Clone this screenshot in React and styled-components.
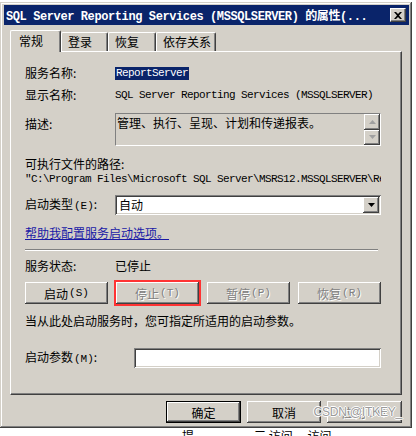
import React from 'react';
import styled, { createGlobalStyle, css } from 'styled-components';

const GlobalStyle = createGlobalStyle`
  html, body {
    margin: 0;
    padding: 0;
    background: #ffffff;
    overflow: hidden;
  }
  body {
    font-family: "Noto Sans CJK SC", "Liberation Sans", sans-serif;
    font-size: 12px;
    color: #000;
  }
`;

const FACE = '#d4d0c8';
const mono = css`
  font-family: "Liberation Mono", "Noto Sans CJK SC", monospace;
  font-size: 11px;
  letter-spacing: -0.6px;
`;
const raised = css`
  box-shadow: inset -1px -1px #404040, inset 1px 1px #ffffff,
    inset -2px -2px #808080, inset 2px 2px ${FACE};
`;
const sunken = css`
  box-shadow: inset 1px 1px #808080, inset -1px -1px #ffffff,
    inset 2px 2px #404040, inset -2px -2px ${FACE};
`;

const Window = styled.div`
  box-sizing: border-box;
  width: 412px;
  height: 426px;
  margin-top: 2px;
  padding: 3px 3px 3px 4px;
  background: ${FACE};
  box-shadow: inset -1px -1px #404040, inset 1px 1px ${FACE},
    inset -2px -2px #808080, inset 2px 2px #ffffff;
  display: flex;
  flex-direction: column;
`;

const TitleBar = styled.div`
  box-sizing: border-box;
  width: 405px;
  height: 20px;
  background: #0a246a;
  display: flex;
  align-items: center;
  padding: 0 3px 0 2px;
`;

const TitleText = styled.span`
  display: block;
  flex: 1 1 0;
  min-width: 0;
  color: #fff;
  font-weight: bold;
  white-space: nowrap;
  overflow: hidden;
  font-family: "Liberation Mono", "Noto Sans CJK SC", monospace;
  font-size: 12px;
  letter-spacing: -0.4px;
`;

const CloseButton = styled.span`
  display: flex;
  flex: 0 0 auto;
  box-sizing: border-box;
  width: 16px;
  height: 14px;
  margin-left: 6px;
  background-color: ${FACE};
  border-top: 1px solid #ffffff;
  border-left: 1px solid #ffffff;
  border-right: 1px solid #404040;
  border-bottom: 1px solid #404040;
  box-shadow: inset -1px -1px #808080;
  align-items: center;
  justify-content: center;
`;

const Body = styled.div`
  padding: 5px 7px 0 6px;
`;

const TabRow = styled.div`
  display: flex;
  align-items: flex-end;
  height: 21px;
  position: relative;
  z-index: 1;
`;

const Tab = styled.div`
  box-sizing: border-box;
  width: ${p => p.$w}px;
  height: ${p => (p.$active ? 22 : 19)}px;
  margin-bottom: ${p => (p.$active ? -1 : 0)}px;
  padding: ${p => (p.$active ? '3px 0 0 8px' : '2px 0 0 6px')};
  background: ${FACE};
  border-top: 1px solid #fff;
  border-left: 1px solid #fff;
  border-right: 1px solid #404040;
  border-radius: 2px 2px 0 0;
  box-shadow: inset -1px 0 #808080;
  line-height: 14px;
  font-size: 12px;
`;

const Panel = styled.div`
  box-sizing: border-box;
  height: 344px;
  border-top: 1px solid #fff;
  border-left: 1px solid #fff;
  border-right: 1px solid #404040;
  border-bottom: 1px solid #404040;
  box-shadow: inset -1px -1px #808080;
  padding: 14px 20px 0 14px;
  display: flex;
  flex-direction: column;
`;

const Row = styled.div`
  display: flex;
  align-items: ${p => p.$align || 'center'};
  min-height: ${p => p.$h || 14}px;
  margin-top: ${p => p.$mt || 0}px;
  line-height: 14px;
`;

const Label = styled.div`
  width: ${p => p.$w || 90}px;
  flex-shrink: 0;
  padding-top: ${p => p.$pt || 0}px;
`;

const Selected = styled.span`
  ${mono};
  background: #0a246a;
  color: #fff;
  line-height: 13px;
  padding: 0 1px;
`;

const MonoText = styled.div`
  ${mono};
  white-space: nowrap;
  overflow: hidden;
`;

const DescBox = styled.div`
  flex: 1;
  box-sizing: border-box;
  height: 33px;
  border-top: 1px solid #808080;
  border-left: 1px solid #808080;
  border-bottom: 1px solid #fff;
  border-right: 1px solid #fff;
  display: flex;
`;

const DescText = styled.div`
  flex: 1;
  padding: 2px 0 0 1px;
  line-height: 14px;
`;

const ScrollCol = styled.div`
  width: 16px;
  display: flex;
  flex-direction: column;
`;

const ScrollBtn = styled.div`
  box-sizing: border-box;
  flex: 1;
  background: ${FACE};
  ${raised};
  display: flex;
  align-items: center;
  justify-content: center;
`;

const Combo = styled.div`
  flex: 1;
  box-sizing: border-box;
  height: 20px;
  background: #fff;
  ${sunken};
  display: flex;
  align-items: center;
  padding: 2px 2px 2px 4px;
`;

const ComboValue = styled.div`
  flex: 1;
`;

const DropBtn = styled.div`
  box-sizing: border-box;
  width: 16px;
  height: 16px;
  background: ${FACE};
  ${raised};
  display: flex;
  align-items: center;
  justify-content: center;
`;

const HelpLink = styled.a`
  color: #1a1aa6;
  text-decoration: underline;
  cursor: pointer;
`;

const Separator = styled.div`
  height: 0;
  margin-top: 9px;
  margin-right: 3px;
  border-top: 1px solid #808080;
  border-bottom: 1px solid #fff;
`;

const ButtonGrid = styled.div`
  display: grid;
  grid-template-columns: repeat(4, 1fr);
  column-gap: 8px;
  margin-top: 9px;
`;

const Button = styled.div`
  box-sizing: border-box;
  height: ${p => p.$h || 22}px;
  width: ${p => (p.$w ? `${p.$w}px` : 'auto')};
  background: ${FACE};
  ${raised};
  display: flex;
  align-items: center;
  justify-content: center;
  font-size: 12px;
  color: ${p => (p.$disabled ? '#808080' : '#000')};
  text-shadow: ${p => (p.$disabled ? '1px 1px #ffffff' : 'none')};
  outline: ${p => (p.$marked ? '2px solid #ff3333' : 'none')};
  border: ${p => (p.$default ? '1px solid #000' : 'none')};
`;

const Key = styled.span`
  font-family: "Liberation Mono", monospace;
  font-size: 11px;
  margin-left: 1px;
`;

const Input = styled.div`
  flex: 1;
  box-sizing: border-box;
  height: 20px;
  background: #fff;
  ${sunken};
`;

const ButtonBar = styled.div`
  position: relative;
  display: flex;
  justify-content: flex-end;
  gap: 6px;
  padding: 6px 7px 0 0;
`;

const Watermark = styled.div`
  position: absolute;
  right: 7px;
  top: 10px;
  font-family: "Liberation Sans", sans-serif;
  font-size: 12px;
  color: #9a9a9a;
  text-shadow: 1px 0 #fff, -1px 0 #fff, 0 1px #fff, 0 -1px #fff;
  letter-spacing: -0.2px;
`;

const BelowStrip = styled.div`
  display: flex;
  gap: 60px;
  padding: 1px 0 0 182px;
  line-height: 14px;
  white-space: nowrap;
`;

const Arrow = ({ dir = 'down', color = '#000' }) => (
  <svg width="7" height="4" viewBox="0 0 7 4">
    {dir === 'down'
      ? <polygon points="0,0 7,0 3.5,4" fill={color} />
      : <polygon points="0,4 7,4 3.5,0" fill={color} />}
  </svg>
);

const CloseIcon = () => (
  <svg width="8" height="7" viewBox="0 0 8 7">
    <path d="M0 0 L2 0 L4 2 L6 0 L8 0 L5 3.5 L8 7 L6 7 L4 5 L2 7 L0 7 L3 3.5 Z" fill="#000" />
  </svg>
);

const App = () => (
  <>
    <GlobalStyle />
    <Window>
      <TitleBar>
        <TitleText>SQL Server Reporting Services (MSSQLSERVER) 的属性(...</TitleText>
        <CloseButton><CloseIcon /></CloseButton>
      </TitleBar>

      <Body>
        <TabRow>
          <Tab $w={51} $active>常规</Tab>
          <Tab $w={47}>登录</Tab>
          <Tab $w={48}>恢复</Tab>
          <Tab $w={60}>依存关系</Tab>
        </TabRow>

        <Panel>
          <Row $h={14}>
            <Label>服务名称:</Label>
            <Selected>ReportServer</Selected>
          </Row>
          <Row $mt={8}>
            <Label>显示名称:</Label>
            <MonoText>SQL Server Reporting Services (MSSQLSERVER)</MonoText>
          </Row>
          <Row $mt={11} $align="flex-start">
            <Label $pt={4}>描述:</Label>
            <DescBox>
              <DescText>管理、执行、呈现、计划和传递报表。</DescText>
              <ScrollCol>
                <ScrollBtn><Arrow dir="up" color="#a0a0a0" /></ScrollBtn>
                <ScrollBtn><Arrow dir="down" color="#a0a0a0" /></ScrollBtn>
              </ScrollCol>
            </DescBox>
          </Row>
          <Row $mt={11}>可执行文件的路径:</Row>
          <Row $mt={1}>
            <MonoText>"C:\Program Files\Microsoft SQL Server\MSRS12.MSSQLSERVER\Reporting Services\ReportServer\bin\ReportingServicesService.exe"</MonoText>
          </Row>
          <Row $mt={9}>
            <Label>启动类型<Key>(E)</Key>:</Label>
            <Combo>
              <ComboValue>自动</ComboValue>
              <DropBtn><Arrow /></DropBtn>
            </Combo>
          </Row>
          <Row $mt={11}>
            <HelpLink>帮助我配置服务启动选项。</HelpLink>
          </Row>
          <Separator />
          <Row $mt={8}>
            <Label>服务状态:</Label>
            <div>已停止</div>
          </Row>
          <ButtonGrid>
            <Button>启动<Key>(S)</Key></Button>
            <Button $disabled $marked>停止<Key>(T)</Key></Button>
            <Button $disabled>暂停<Key>(P)</Key></Button>
            <Button $disabled>恢复<Key>(R)</Key></Button>
          </ButtonGrid>
          <Row $mt={10}>当从此处启动服务时，您可指定所适用的启动参数。</Row>
          <Row $mt={20}>
            <Label $w={109}>启动参数<Key>(M)</Key>:</Label>
            <Input />
          </Row>
        </Panel>
      </Body>

      <ButtonBar>
        <Button $w={75} $h={22} $default>确定</Button>
        <Button $w={74} $h={22}>取消</Button>
        <Button $w={75} $h={22} $disabled>应用<Key>(A)</Key></Button>
        <Watermark>CSDN @ITKEY_</Watermark>
      </ButtonBar>
    </Window>
    <BelowStrip>
      <span>提</span>
      <span>三 访问 ，访问</span>
    </BelowStrip>
  </>
);

export default App;
